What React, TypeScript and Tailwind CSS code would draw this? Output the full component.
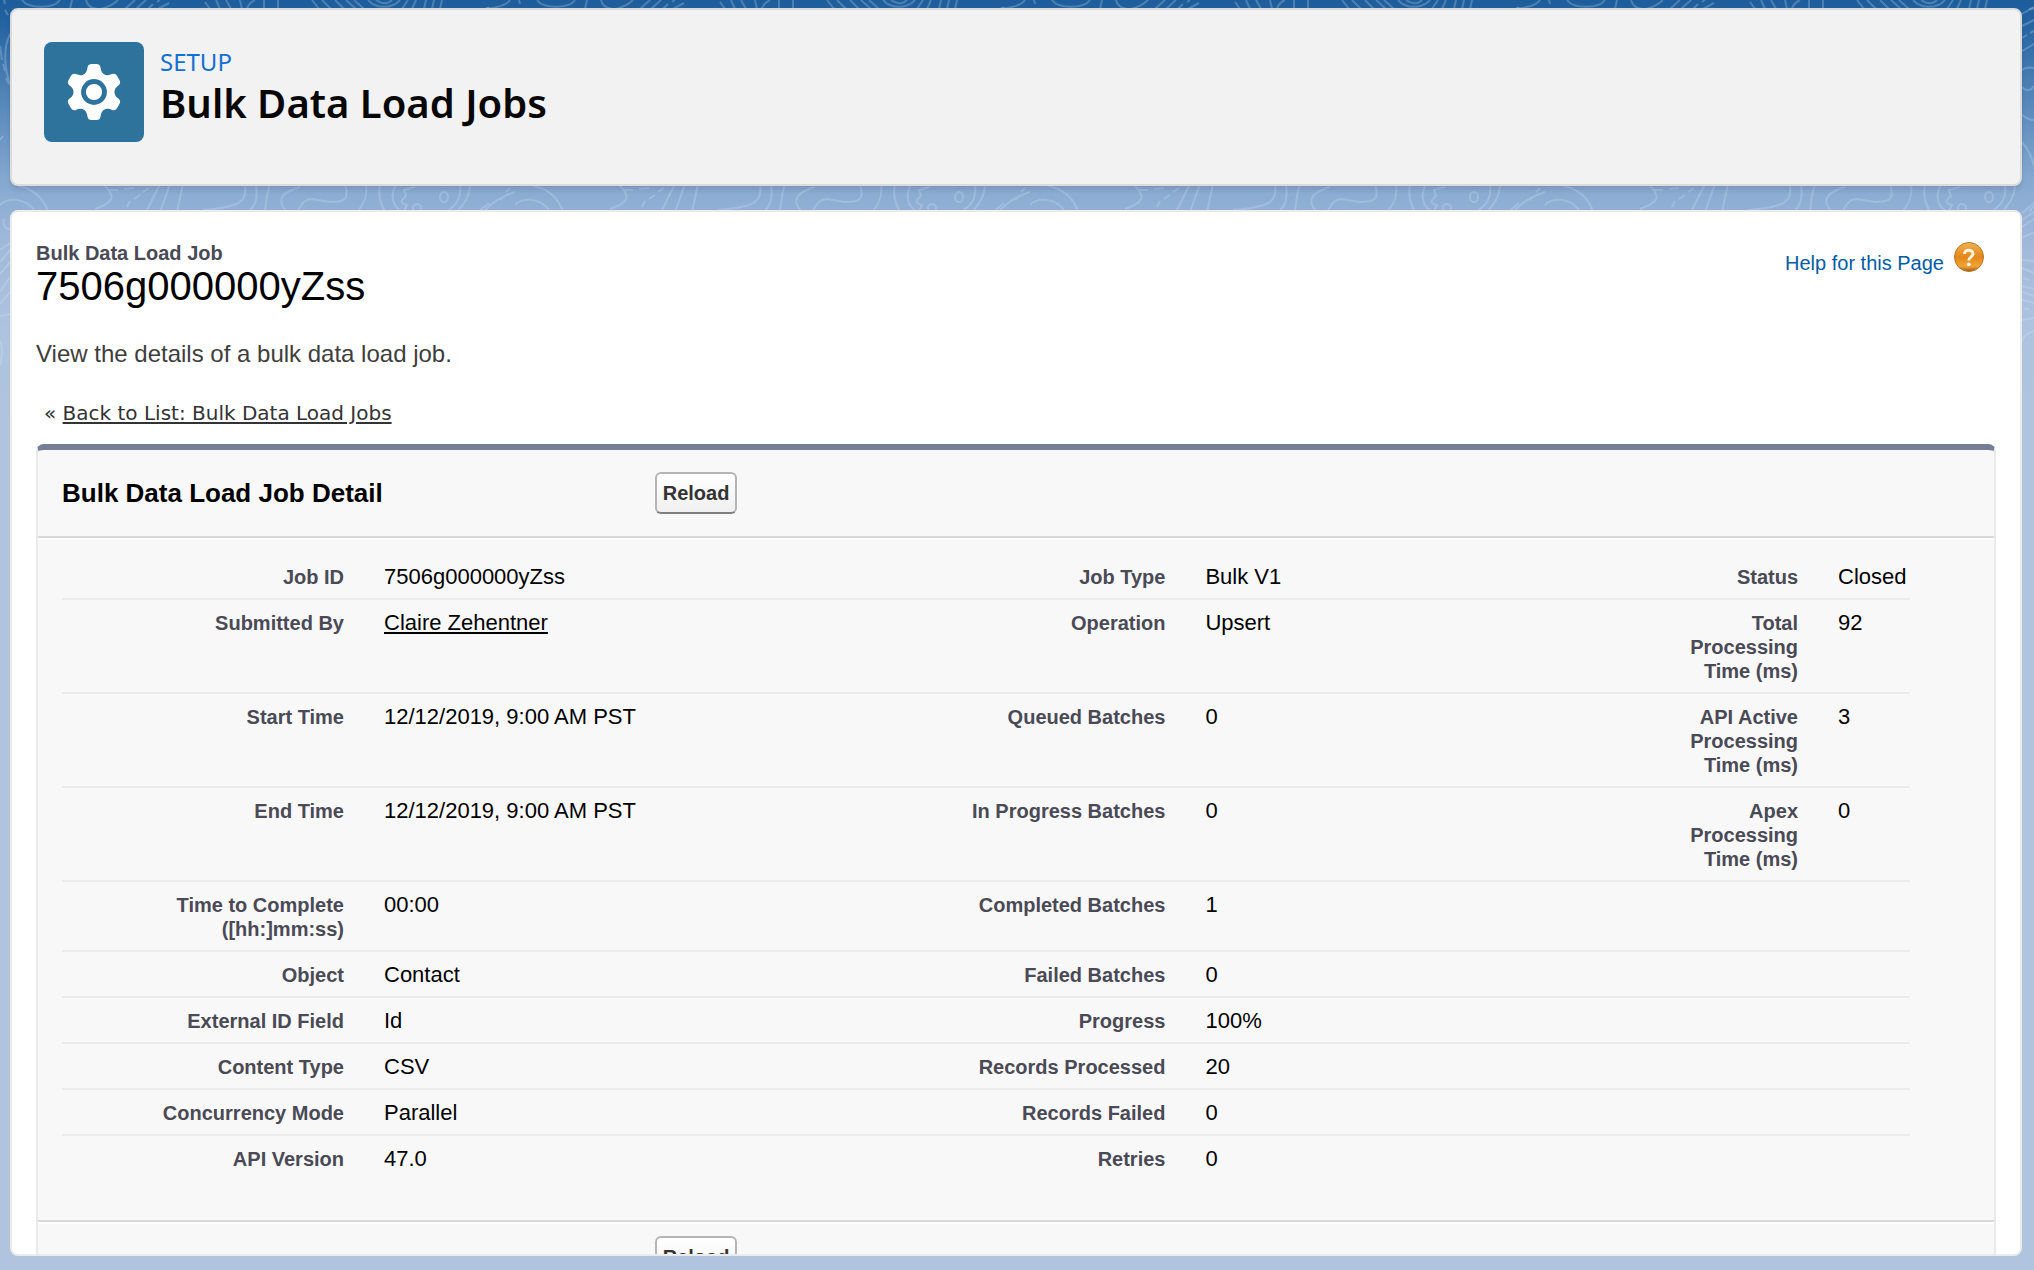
import React from "react";

type Field = { label: string; value: string; link?: boolean };
type Row = [Field, Field, Field?];

const rows: Row[] = [
  [
    { label: "Job ID", value: "7506g000000yZss" },
    { label: "Job Type", value: "Bulk V1" },
    { label: "Status", value: "Closed" },
  ],
  [
    { label: "Submitted By", value: "Claire Zehentner", link: true },
    { label: "Operation", value: "Upsert" },
    { label: "Total Processing Time (ms)", value: "92" },
  ],
  [
    { label: "Start Time", value: "12/12/2019, 9:00 AM PST" },
    { label: "Queued Batches", value: "0" },
    { label: "API Active Processing Time (ms)", value: "3" },
  ],
  [
    { label: "End Time", value: "12/12/2019, 9:00 AM PST" },
    { label: "In Progress Batches", value: "0" },
    { label: "Apex Processing Time (ms)", value: "0" },
  ],
  [
    { label: "Time to Complete ([hh:]mm:ss)", value: "00:00" },
    { label: "Completed Batches", value: "1" },
  ],
  [
    { label: "Object", value: "Contact" },
    { label: "Failed Batches", value: "0" },
  ],
  [
    { label: "External ID Field", value: "Id" },
    { label: "Progress", value: "100%" },
  ],
  [
    { label: "Content Type", value: "CSV" },
    { label: "Records Processed", value: "20" },
  ],
  [
    { label: "Concurrency Mode", value: "Parallel" },
    { label: "Records Failed", value: "0" },
  ],
  [
    { label: "API Version", value: "47.0" },
    { label: "Retries", value: "0" },
  ],
];

const contours = [
  // upper edge
  "M22 0C28 9 54 9 60 0 M72 0L70 9 M86 0C87 5 91 8 97 9 M101 9C108 7 114 4 118 0 M125 9L135 0 M136 9L146 0 M148 9L153 4 M157 2L160 0 M158 9L169 3",
  "M205 2L210 9 M216 0L220 9 M226 0L231 9 M240 0L242 9 M247 9C248 4 251 2 255 0 M264 0V9 M278 0V9 M312 0L319 9 M322 0L331 9 M335 0L344 9",
  "M346 0L356 9 M354 0L364 9 M368 0C376 9 392 9 400 0 M376 0C382 4 388 4 392 0 M402 9L408 0 M412 9L416 0 M424 9L426 0 M432 9L434 0 M440 9L442 0 M484 9C496 8 506 6 510 0",
  // middle band
  "M18 186C32 188 44 198 48 212 M0 205C5 198 26 196 35 212 M103 184C116 196 115 202 95 209 M108 190H118 M124 189L134 188 M149 188L143 192 M140 195L134 199 M130 201L127 207",
  "M160 184L146 212 M170 184L160 212 M183 184L177 212 M245 184C248 202 240 207 203 210 M256 184C258 200 255 205 249 212 M270 184C266 196 266 204 265 212",
  "M300 187C276 194 279 204 287 212 M345 184C350 200 344 202 330 202L312 199C305 199 302 203 297 212 M366 184C368 196 364 204 357 212 M380 184C378 196 380 202 385 212",
  "M396 184C388 200 396 208 402 212 M415 187L404 190L406 196C398 203 402 203 407 205L404 211 M440 197a4 5 0 1 0 8 0a4 5 0 1 0 -8 0 M413 208a4 4 0 1 0 8 0a4 4 0 1 0 -8 0",
  "M460 184C462 200 455 206 446 212 M470 184C470 198 462 206 457 212 M484 212C492 201 504 196 515 192 M510 188L506 192 M504 196L500 200",
  // right side
  "M477 14L489 7 M477 26L489 20 M477 38L482 35 M485 33L489 31 M477 51L489 44 M477 70C481 67 485 67 489 68 M477 87C481 92 487 90 489 86 M477 115C481 118 485 120 489 120 M477 142C484 150 488 160 490 170",
  "M477 213L489 203 M477 220L489 212 M477 227L489 219 M477 238C481 235 485 234 489 233 M477 260L489 261 M477 268L489 273 M478 278L484 280 M477 286L489 289 M477 292L489 296 M477 300L489 303 M479 309H485 M477 320L489 318 M477 341C479 335 484 332 489 331",
  // left side
  "M10 34C3 48 4 70 11 86 M4 0L5 4 M5 10L8 15 M0 46L2 60 M3 64L5 71 M6 78L9 84 M0 140L3 136 M4 219C2 226 6 230 12 229 M0 250L10 243 M0 262L10 250 M0 274L10 262 M0 292L10 277 M0 304L10 292 M0 316L10 314 M0 341C3 346 2 358 0 366",
];

function Backdrop() {
  return (
    <div className="absolute inset-x-0 top-0 -z-10 h-[420px] bg-linear-[180deg,#1d5d9b_0px,#2262a0_20px,#4f82b6_90px,#85a8d0_180px,#9fb8da_240px,#aec3df_330px,#b0c4df_420px]">
      <svg className="h-full w-full" aria-hidden="true">
        <defs>
          <pattern id="contours" width="515" height="420" patternUnits="userSpaceOnUse">
            <g fill="none" stroke="#d6e8f8" strokeOpacity="0.25" strokeWidth="2">
              {contours.map((d) => (
                <path key={d} d={d} />
              ))}
            </g>
          </pattern>
        </defs>
        <rect width="100%" height="100%" fill="url(#contours)" />
      </svg>
    </div>
  );
}

function GearIcon() {
  return (
    <svg viewBox="-50 -50 100 100" className="size-[100px] shrink-0 rounded-lg bg-[#2e739c]" aria-hidden="true">
      <g fill="#fff">
        <circle r="20.5" />
        {[0, 60, 120, 180, 240, 300].map((a) => (
          <path
            key={a}
            transform={`rotate(${a})`}
            d="M-11 -16C-8.500 -19 -6.800 -20.500 -6.500 -24.500Q-6 -28 -2.500 -28H2.500Q6 -28 6.500 -24.500C6.800 -20.500 8.500 -19 11 -16Z"
          />
        ))}
      </g>
      <circle r="10.5" fill="none" stroke="#2e739c" strokeWidth="4.800" />
    </svg>
  );
}

function HelpIcon() {
  return (
    <svg viewBox="0 0 30 30" className="size-[30px] shrink-0" aria-hidden="true">
      <defs>
        <linearGradient id="help-fill" x1="0" y1="0" x2="0" y2="1">
          <stop offset="0" stopColor="#efb453" />
          <stop offset="0.5" stopColor="#e5871a" />
          <stop offset="0.82" stopColor="#f0a436" />
          <stop offset="1" stopColor="#9c5a18" />
        </linearGradient>
      </defs>
      <circle cx="15" cy="15" r="14.500" fill="url(#help-fill)" stroke="#b9752a" strokeWidth="1" />
      <path d="M10.500 12C10.500 7 19 7 19 12C19 15 14.800 14.800 14.800 18.500" fill="none" stroke="#fff3df" strokeWidth="3" />
      <circle cx="14.800" cy="22.300" r="1.900" fill="#fff3df" />
    </svg>
  );
}

function ReloadButton() {
  return (
    <button
      type="button"
      className="h-[42px] rounded-md border-2 border-[#b5b5b5] border-b-[#7f7f7f] bg-linear-to-b from-white to-[#f0f0f0] px-1.5 text-[20px] leading-6 font-bold text-[#333]"
    >
      Reload
    </button>
  );
}

function FieldCells({ field, last }: { field?: Field; last: boolean }) {
  const line = last ? "" : "border-b-2 border-[#ebebeb]";
  return (
    <>
      <th
        scope="row"
        className={`${line} pt-[11px] pr-5 pb-[9px] text-right align-top text-[20px] leading-6 font-bold text-[#4a4a56]`}
      >
        {field?.label}
      </th>
      <td className={`${line} pt-[11px] pb-[9px] pl-5 align-top text-[22px] leading-6 whitespace-nowrap`}>
        {field?.link ? (
          <a href="#submitter" className="underline decoration-2 underline-offset-2">
            {field.value}
          </a>
        ) : (
          field?.value
        )}
      </td>
    </>
  );
}

export default function App() {
  return (
    <div className="relative isolate flex h-screen flex-col gap-6 overflow-hidden bg-[#b0c4df] pt-2 pr-3 pb-3.5 pl-2.5 font-['Liberation_Sans',Arial,sans-serif] text-black">
      <Backdrop />

      <header className="flex shrink-0 gap-4 rounded-lg border-2 border-[#dddbda] bg-[#f2f2f2] px-8 pt-8 pb-[42px] font-['Noto_Sans','Open_Sans',sans-serif] shadow-[0_4px_4px_rgba(0,0,0,0.1)]">
        <GearIcon />
        <div className="pt-[5px]">
          <p className="text-[24px] leading-[30px] text-[#1170d2]">SETUP</p>
          <h1 className="text-[40px] leading-[52px] font-semibold text-[#080707]">Bulk Data Load Jobs</h1>
        </div>
      </header>

      <main className="flex min-h-0 flex-1 flex-col overflow-hidden rounded-lg border-2 border-[#ecebea] bg-white px-6 pt-[29px]">
        <div className="flex items-start justify-between">
          <div>
            <p className="text-[20px] leading-6 font-bold text-[#4a4a56]">Bulk Data Load Job</p>
            <h2 className="text-[40px] leading-[42px]">7506g000000yZss</h2>
          </div>
          <a href="#help" className="flex gap-2.5 pt-px pr-3 text-[20px] leading-6 text-[#015ba7]">
            <span className="pt-[9px]">Help for this Page</span>
            <HelpIcon />
          </a>
        </div>

        <p className="mt-[33px] text-[24px] leading-7 text-[#3e3e3c]">View the details of a bulk data load job.</p>

        <p className="mt-[33px] pl-2 font-['DejaVu_Sans',Verdana,sans-serif] text-[20px] leading-6 text-[#333]">
          «{" "}
          <a href="#jobs" className="underline decoration-2 underline-offset-2">
            Back to List: Bulk Data Load Jobs
          </a>
        </p>

        <section className="mt-[19px] shrink-0 rounded-t-lg border-x-2 border-t-6 border-x-[#eaeaea] border-t-[#747e96] bg-[#f8f8f8]">
          <div className="flex h-[88px] items-center border-b-2 border-[#d9d9d9] pr-5 pl-6">
            <h3 className="w-[31%] text-[26px] leading-8 font-bold">Bulk Data Load Job Detail</h3>
            <ReloadButton />
          </div>

          <div className="border-t-2 border-white pt-3.5 pr-[84px] pb-10 pl-6">
            <table className="w-full table-fixed border-separate border-spacing-0">
              <colgroup>
                <col className="w-[302px]" />
                <col className="w-[28%]" />
                <col className="w-[304px]" />
                <col />
                <col className="w-[137px]" />
                <col className="w-[92px]" />
              </colgroup>
              <tbody>
                {rows.map((row, i) => {
                  const last = i === rows.length - 1;
                  return (
                    <tr key={row[0].label}>
                      <FieldCells field={row[0]} last={last} />
                      <FieldCells field={row[1]} last={last} />
                      <FieldCells field={row[2]} last={last} />
                    </tr>
                  );
                })}
              </tbody>
            </table>
          </div>

          <div className="border-t-2 border-[#d9d9d9]">
            <div className="flex border-t-2 border-white pt-3 pr-5 pb-3 pl-6">
              <div className="w-[31%]" />
              <ReloadButton />
            </div>
          </div>
        </section>
      </main>
    </div>
  );
}
